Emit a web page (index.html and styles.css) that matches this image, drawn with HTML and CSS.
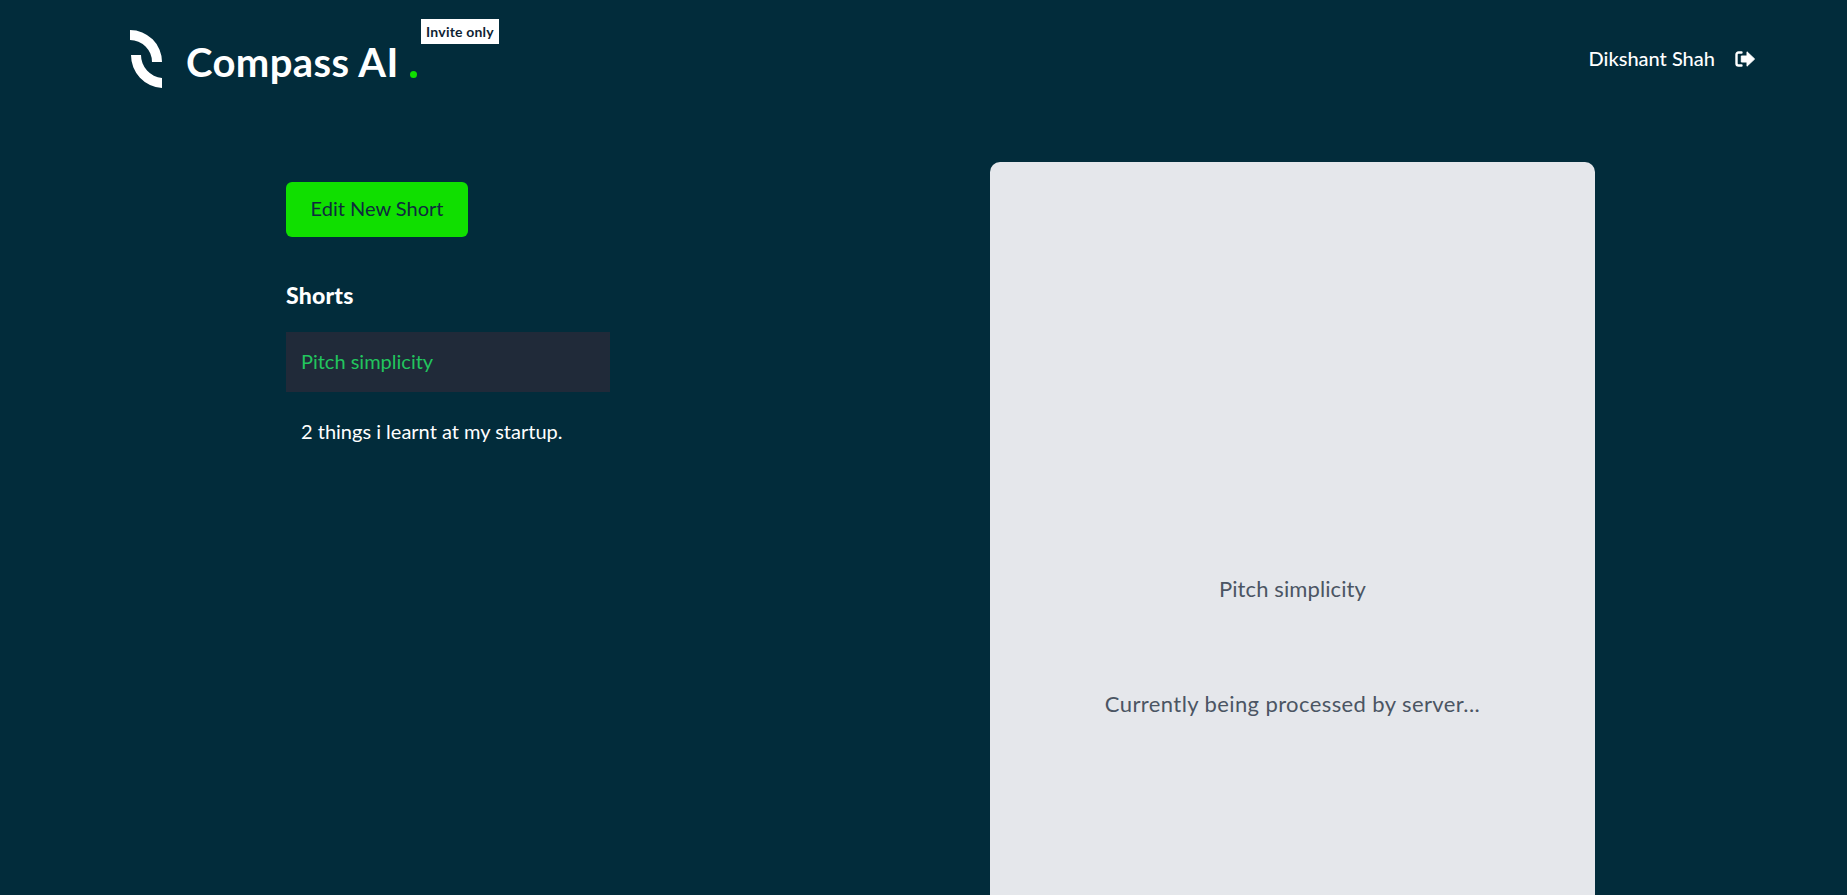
FILE: index.html
```html
<!DOCTYPE html>
<html lang="en">
<head>
<meta charset="utf-8">
<title>Compass AI</title>
<link rel="stylesheet" href="styles.css">
</head>
<body>
<header class="header">
  <div class="brand">
    <svg class="logo" viewBox="0 0 32 58" width="32" height="58" aria-hidden="true">
      <path d="M0 0A32 32 0 0 1 32 32H22A22 22 0 0 0 0 10Z" fill="#fff"/>
      <path d="M1 25A33 33 0 0 0 32 58V48A23 23 0 0 1 11 25Z" fill="#fff"/>
    </svg>
    <span class="brand-name">Compass AI</span>
    <span class="brand-dot"></span>
    <span class="badge">Invite only</span>
  </div>
  <div class="user">
    <span class="user-name">Dikshant Shah</span>
    <svg class="logout" viewBox="0 0 20 16" width="20" height="16" aria-hidden="true">
      <path d="M6.5 1.500H3.500A2 2 0 0 0 1.500 3.500V12.500A2 2 0 0 0 3.500 14.500H6.500" fill="none" stroke="#fff" stroke-width="2.400" stroke-linecap="round"/>
      <path d="M12 .8 19.600 8 12 15.200V11H6.300V5H12Z" fill="#fff" stroke="#fff" stroke-linejoin="round"/>
    </svg>
  </div>
</header>
<main class="main">
  <section class="sidebar">
    <button class="new-btn" type="button">Edit New Short</button>
    <h2 class="list-title">Shorts</h2>
    <ul class="list">
      <li class="item item-active">Pitch simplicity</li>
      <li class="item">2 things i learnt at my startup.</li>
    </ul>
  </section>
  <section class="card">
    <p class="card-title">Pitch simplicity</p>
    <p class="card-status">Currently being processed by server...</p>
  </section>
</main>
</body>
</html>
```
FILE: styles.css
```css
* { box-sizing: border-box; }
html, body { margin: 0; height: 100%; overflow: hidden; }
body {
  background: #022c3b;
  color: #fff;
  font-family: "Lato", "Open Sans", sans-serif;
}
.header {
  display: flex;
  justify-content: space-between;
  align-items: flex-start;
  padding: 30px 92px 0 130px;
  height: 162px;
}
.brand { display: flex; align-items: flex-start; position: relative; }
.logo { display: block; margin-right: 24px; }
.brand-name {
  font-size: 40px;
  line-height: 50px;
  font-weight: 700;
  margin-top: 7px;
  letter-spacing: 0.4px;
  white-space: nowrap;
}
.brand-dot {
  width: 7px;
  height: 7px;
  border-radius: 50%;
  background: #10df00;
  margin: 41px 0 0 11px;
}
.badge {
  position: absolute;
  left: 291px;
  top: -11px;
  width: 78px;
  height: 25px;
  background: #fff;
  color: #0f1f33;
  font-size: 14px;
  font-weight: 700;
  letter-spacing: 0.2px;
  line-height: 25px;
  text-align: center;
  white-space: nowrap;
}
.user { display: flex; align-items: center; gap: 20px; padding-top: 18px; }
.user-name { font-size: 20px; line-height: 20px; padding-bottom: 2px; font-weight: 500; white-space: nowrap; }
.logout { display: block; }
.main { display: flex; align-items: flex-start; padding-left: 286px; }
.sidebar { width: 324px; padding-top: 20px; }
.new-btn {
  display: block;
  width: 182px;
  height: 55px;
  padding: 0 0 3px;
  border: 0;
  border-radius: 6px;
  background: #10df00;
  color: #0f2a3f;
  font: 400 20px "Lato", sans-serif;
}
.list-title {
  margin: 43px 0 0;
  font-size: 23px;
  line-height: 30px;
  font-weight: 900;
  letter-spacing: 0.2px;
}
.list { list-style: none; margin: 22px 0 0; padding: 0; display: flex; flex-direction: column; gap: 10px; }
.item {
  height: 60px;
  padding: 0 15px;
  font-size: 20px;
  line-height: 58px;
  white-space: nowrap;
}
.item-active { background: #202a39; color: #22c55e; }
.card {
  margin-left: 380px;
  width: 605px;
  height: 1100px;
  padding-top: 410px;
  background: #e5e7eb;
  border-radius: 10px;
  color: #4b5563;
  text-align: center;
  font-size: 22px;
  line-height: 34px;
}
.card-title { margin: 0; letter-spacing: 0.1px; }
.card-status { margin: 81px 0 0; letter-spacing: 0.4px; }
```
